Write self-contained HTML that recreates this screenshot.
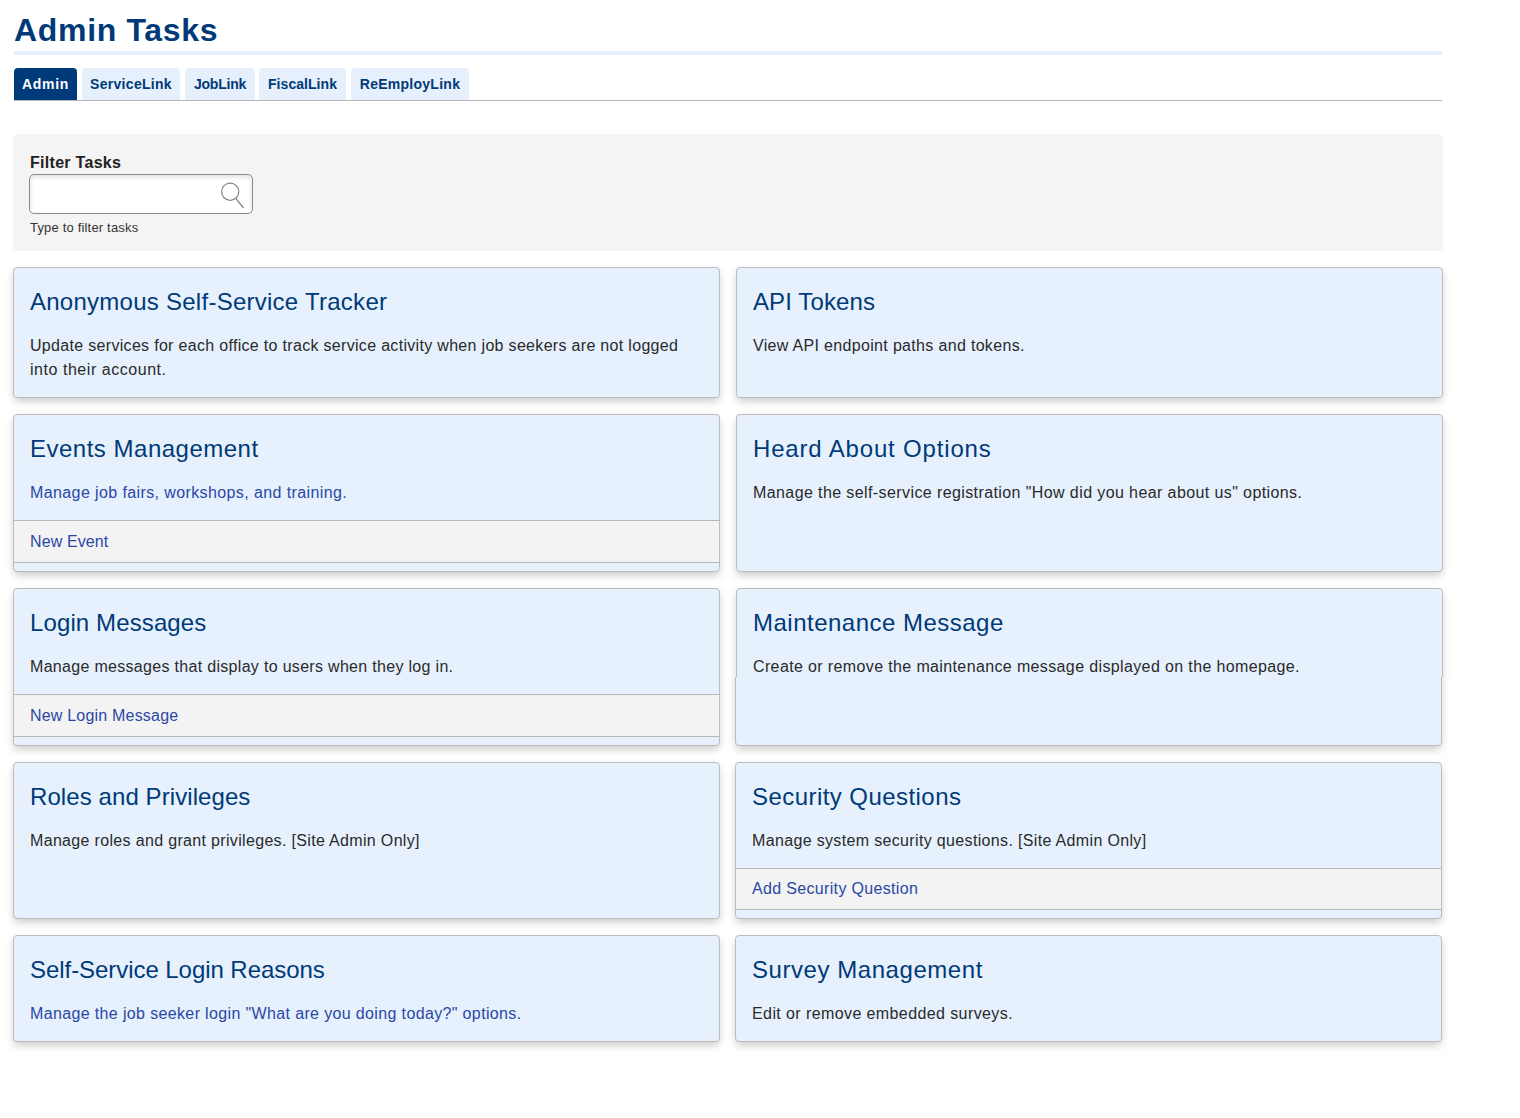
<!DOCTYPE html>
<html>
<head>
<meta charset="utf-8">
<style>
* { box-sizing: border-box; }
html, body { margin: 0; padding: 0; background: #fff; }
body { font-family: "Liberation Sans", sans-serif; color: #333; width: 1520px; height: 1118px; overflow: hidden; position: relative; }
.wrap { position: absolute; left: 13px; top: 0; width: 1430px; }
.clip { position: absolute; overflow: hidden; }
h1 { margin: 0; position: absolute; left: 1px; top: 10px; font-size: 32px; line-height: 40px; font-weight: 700; color: #003a78; white-space: nowrap; }
.hline { position: absolute; left: 1px; top: 51px; width: 1428px; height: 4px; background: #e6f0fc; }
.tabs { position: absolute; left: 1px; top: 68px; width: 1428px; height: 33px; border-bottom: 1px solid #b5b5b5; }
.tab { position: absolute; top: 0; height: 32px; border-radius: 4px 4px 0 0; background: #e6f0fc; color: #003a78; font-weight: 700; font-size: 14px; line-height: 32px; text-align: center; white-space: nowrap; }
.tab.active { background: #003a7a; color: #fff; }
.filter { position: absolute; left: 0; top: 134px; width: 1430px; height: 117px; background: #f4f4f4; border-radius: 5px; }
.flabel { position: absolute; left: 17px; top: 19px; font-size: 16px; line-height: 20px; font-weight: 700; color: #222; white-space: nowrap; }
.finput { position: absolute; left: 16px; top: 40px; width: 224px; height: 40px; background: #fff; border: 1.5px solid #8a8a8a; border-radius: 5px; box-shadow: inset 0 2px 4px rgba(0,0,0,0.13); }
.finput svg { position: absolute; left: 189px; top: 6px; }
.fhelp { position: absolute; left: 17px; top: 86px; font-size: 13px; line-height: 16px; color: #333; white-space: nowrap; }
.card { position: absolute; width: 707px; background: #e6f1fd; border: 1px solid #bdbdbd; border-radius: 4px; box-shadow: 0 4px 8px -1px rgba(0,0,0,0.22); overflow: hidden; }
.card h3 { margin: 0; position: absolute; left: 16px; top: 17px; font-size: 24px; line-height: 33px; font-weight: 400; color: #003a78; white-space: nowrap; }
.card p { margin: 0; position: absolute; left: 16px; top: 66px; font-size: 16px; line-height: 24px; color: #2a2a2a; white-space: nowrap; }
.card p.link { color: #2a47a6; }
.card .foot { position: absolute; left: 0; right: 0; height: 43px; background: #f3f3f3; border-top: 1px solid #b8b8b8; border-bottom: 1px solid #b8b8b8; }
.card .foot span { position: absolute; left: 16px; top: 9px; font-size: 16px; line-height: 24px; color: #2a47a6; white-space: nowrap; }

</style>
</head>
<body>
<div class="wrap">
  <h1 id="h1" style="letter-spacing:0.680px;">Admin Tasks</h1>
  <div class="hline"></div>
  <div class="tabs">
    <div class="tab active" style="left:0;width:63px;"><span id="tab1" style="letter-spacing:0.725px;">Admin</span></div>
    <div class="tab" style="left:68px;width:98px;"><span id="tab2" style="letter-spacing:0.300px;">ServiceLink</span></div>
    <div class="tab" style="left:171px;width:70px;"><span id="tab3" style="letter-spacing:-0.233px;">JobLink</span></div>
    <div class="tab" style="left:245px;width:87px;"><span id="tab4" style="letter-spacing:0.056px;">FiscalLink</span></div>
    <div class="tab" style="left:337px;width:118px;"><span id="tab5" style="letter-spacing:0.264px;">ReEmployLink</span></div>
  </div>
  <div class="filter">
    <div class="flabel" id="flabel" style="letter-spacing:0.291px;">Filter Tasks</div>
    <div class="finput"><svg width="28" height="28" viewBox="0 0 28 28"><circle cx="11.2" cy="10.7" r="8.6" fill="none" stroke="#858585" stroke-width="1.2"/><line x1="16.8" y1="17.3" x2="24.5" y2="27" stroke="#858585" stroke-width="1.3"/></svg></div>
    <div class="fhelp" id="fhelp" style="letter-spacing:0.179px;">Type to filter tasks</div>
  </div>
</div>
<div class="card" style="left:13px;top:267px;height:131px;">
<h3 id="c1t" style="letter-spacing:0.259px;">Anonymous Self-Service Tracker</h3>
<p id="c1d" style="letter-spacing:0.312px;">Update services for each office to track service activity when job seekers are not logged</p>
<p id="c1d2" style="top:90px;letter-spacing:0.539px;">into their account.</p>
</div>
<div class="card" style="left:736px;top:267px;height:131px;">
<h3 id="c2t" style="letter-spacing:0.111px;">API Tokens</h3>
<p id="c2d" style="letter-spacing:0.326px;">View API endpoint paths and tokens.</p>
</div>
<div class="card" style="left:13px;top:414px;height:158px;">
<h3 id="c3t" style="letter-spacing:0.500px;">Events Management</h3>
<p class="link" id="c3d" style="letter-spacing:0.393px;">Manage job fairs, workshops, and training.</p>
<div class="foot" style="top:105px;height:43px;"><span id="c3f" style="top:9px;letter-spacing:0.112px;">New Event</span></div>
</div>
<div class="card" style="left:736px;top:414px;height:158px;">
<h3 id="c4t" style="letter-spacing:0.833px;">Heard About Options</h3>
<p id="c4d" style="letter-spacing:0.401px;">Manage the self-service registration "How did you hear about us" options.</p>
</div>
<div class="card" style="left:13px;top:588px;height:158px;">
<h3 id="c5t" style="letter-spacing:0.115px;">Login Messages</h3>
<p id="c5d" style="letter-spacing:0.307px;">Manage messages that display to users when they log in.</p>
<div class="foot" style="top:105px;height:43px;"><span id="c5f" style="top:9px;letter-spacing:0.200px;">New Login Message</span></div>
</div>
<div class="clip" style="left:0;top:0;width:1520px;height:677px;"><div class="card" style="left:736px;top:588px;height:158px;">
<h3 id="c6t" style="letter-spacing:0.489px;">Maintenance Message</h3>
<p id="c6d" style="letter-spacing:0.370px;">Create or remove the maintenance message displayed on the homepage.</p>
</div></div>
<div class="clip" style="left:0;top:677px;width:1520px;height:441px;"><div style="position:absolute;left:0;top:-677px;width:1520px;height:1118px;"><div class="card" style="left:735px;top:588px;height:158px;">
<h3 id="c6bt" style="">Maintenance Message</h3>
<p id="c6bd" style="">Create or remove the maintenance message displayed on the homepage.</p>
</div></div></div>
<div class="card" style="left:13px;top:762px;height:157px;">
<h3 id="c7t" style="letter-spacing:0.084px;">Roles and Privileges</h3>
<p id="c7d" style="letter-spacing:0.331px;">Manage roles and grant privileges. [Site Admin Only]</p>
</div>
<div class="card" style="left:735px;top:762px;height:157px;">
<h3 id="c8t" style="letter-spacing:0.441px;">Security Questions</h3>
<p id="c8d" style="letter-spacing:0.342px;">Manage system security questions. [Site Admin Only]</p>
<div class="foot" style="top:105px;height:42px;"><span id="c8f" style="top:8px;letter-spacing:0.335px;">Add Security Question</span></div>
</div>
<div class="card" style="left:13px;top:935px;height:107px;">
<h3 id="c9t" style="letter-spacing:-0.056px;">Self-Service Login Reasons</h3>
<p class="link" id="c9d" style="letter-spacing:0.359px;">Manage the job seeker login "What are you doing today?" options.</p>
</div>
<div class="card" style="left:735px;top:935px;height:107px;">
<h3 id="c10t" style="letter-spacing:0.556px;">Survey Management</h3>
<p id="c10d" style="letter-spacing:0.403px;">Edit or remove embedded surveys.</p>
</div>
</body>
</html>
